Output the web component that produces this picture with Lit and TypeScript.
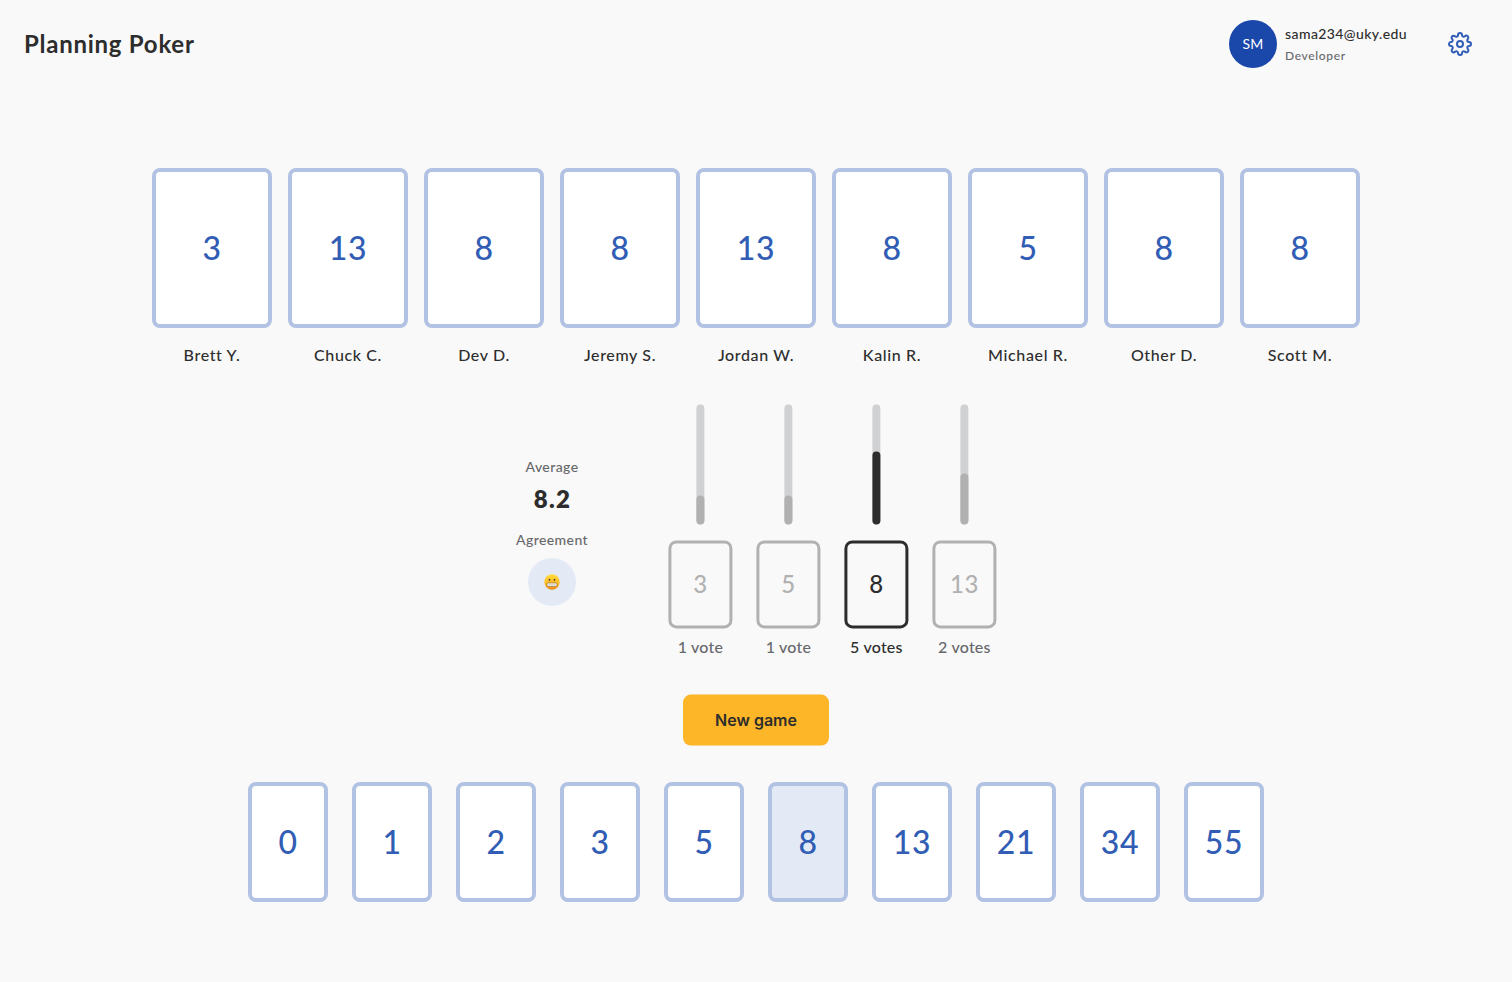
import { LitElement, html, css } from "lit";
import { customElement } from "lit/decorators.js";
import { classMap } from "lit/directives/class-map.js";
import { styleMap } from "lit/directives/style-map.js";

const PLAYERS = [
  { name: "Brett Y.", vote: 3 },
  { name: "Chuck C.", vote: 13 },
  { name: "Dev D.", vote: 8 },
  { name: "Jeremy S.", vote: 8 },
  { name: "Jordan W.", vote: 13 },
  { name: "Kalin R.", vote: 8 },
  { name: "Michael R.", vote: 5 },
  { name: "Other D.", vote: 8 },
  { name: "Scott M.", vote: 8 },
];

const RESULTS = [
  { value: 3, votes: 1, fill: 29 },
  { value: 5, votes: 1, fill: 29 },
  { value: 8, votes: 5, fill: 73 },
  { value: 13, votes: 2, fill: 51 },
];

const DECK = [0, 1, 2, 3, 5, 8, 13, 21, 34, 55];
const SELECTED = 8;

@customElement("app-root")
export class AppRoot extends LitElement {
  static styles = css`
    :host {
      display: flex;
      flex-direction: column;
      box-sizing: border-box;
      height: 982px;
      background: #f9f9f9;
      color: #2d2d2d;
      font-family: Lato, "Open Sans", sans-serif;
      font-weight: 500;
      overflow: hidden;
    }
    * { box-sizing: border-box; }
    .header {
      display: flex;
      align-items: center;
      height: 88px;
      padding: 0 40px 0 24px;
    }
    .title {
      margin: 0;
      flex: 1;
      font-size: 24px;
      line-height: 32px;
      padding-bottom: 1px;
      font-weight: 700;
      letter-spacing: 0.74px;
    }
    .user { display: flex; gap: 8px; width: 219px; }
    .avatar {
      display: grid;
      place-items: center;
      width: 48px;
      height: 48px;
      padding-bottom: 1px;
      border-radius: 50%;
      background: #1a47aa;
      color: #fff;
      font-size: 14px;
      font-weight: 400;
      letter-spacing: 0.3px;
    }
    .email { font-size: 14px; line-height: 20px; padding-top: 4px; letter-spacing: 0.41px; }
    .role { font-size: 12px; line-height: 16px; margin-top: 4px; color: #67686b; letter-spacing: 0.65px; }
    .gear { display: block; width: 24px; height: 24px; color: #315db5; }
    .players { display: flex; justify-content: center; gap: 16px; margin-top: 80px; }
    .player { width: 120px; text-align: center; }
    .card {
      display: grid;
      place-items: center;
      border: 4px solid #b1c2e3;
      border-radius: 8px;
      background: #fff;
      color: #315db5;
      font-size: 32px;
      line-height: 40px;
      letter-spacing: 0.6px;
    }
    .large { height: 160px; }
    .small { width: 80px; height: 120px; }
    .selected { background: #e4eaf5; }
    .name { margin-top: 15px; font-size: 16px; line-height: 24px; letter-spacing: 0.63px; white-space: nowrap; }
    .summary { display: flex; margin: 37px 0 0 492px; height: 255px; }
    .stats { width: 120px; padding-top: 53px; text-align: center; }
    .label { color: #67686b; font-size: 14px; line-height: 20px; letter-spacing: 0.42px; }
    .average { font-size: 24px; line-height: 32px; margin: 6px 0 15px; font-weight: 800; letter-spacing: 1.3px; padding-left: 1px; }
    .mood {
      display: grid;
      place-items: center;
      width: 48px;
      height: 48px;
      margin: 8px auto 0;
      border-radius: 50%;
      background: #e4eaf5;
    }
    .face { display: block; width: 16px; height: 16px; }
    .results { display: flex; gap: 24px; margin-left: 56px; transform: translate(0.4px, 0.4px); }
    .result { display: flex; flex-direction: column; align-items: center; width: 64px; color: #67686b; }
    .track {
      display: flex;
      align-items: flex-end;
      width: 8px;
      height: 120px;
      border-radius: 4px;
      background: #d0d1d2;
    }
    .fill { width: 8px; border-radius: 4px; background: #b1b1b2; }
    .tile {
      display: grid;
      place-items: center;
      width: 64px;
      height: 88px;
      margin-top: 16px;
      padding-bottom: 2px;
      border: 3px solid #b1b1b2;
      border-radius: 8px;
      color: #b1b1b2;
      font-size: 24px;
      letter-spacing: 0.4px;
    }
    .count { margin-top: 8px; font-size: 16px; line-height: 22px; white-space: nowrap; letter-spacing: 0.2px; }
    .top { color: #2d2d2d; }
    .top .fill { background: #2d2d2d; }
    .top .tile { border-color: #2d2d2d; color: #2d2d2d; }
    .action {
      align-self: center;
      width: 146px;
      height: 51px;
      margin-top: 36px;
      padding: 0 0 2px;
      border: 0;
      border-radius: 8px;
      background: #fcb627;
      color: #2d2d2d;
      font: 600 16px Inter, sans-serif;
      transform: translateY(-0.4px);
    }
    .deck { display: flex; justify-content: center; gap: 24px; margin-top: 36px; }
  `;

  render() {
    return html`
      <header class="header">
        <h1 class="title">Planning Poker</h1>
        <div class="user">
          <div class="avatar">SM</div>
          <div>
            <div class="email">sama234@uky.edu</div>
            <div class="role">Developer</div>
          </div>
        </div>
        <svg class="gear" viewBox="0 0 24 24" fill="none" stroke="currentColor" stroke-width="2" stroke-linecap="round" stroke-linejoin="round">
          <circle cx="12" cy="12" r="3"></circle>
          <path d="M19.4 15a1.65 1.65 0 0 0 .33 1.82l.06.06a2 2 0 0 1 0 2.83 2 2 0 0 1-2.83 0l-.06-.06a1.65 1.65 0 0 0-1.82-.33 1.65 1.65 0 0 0-1 1.51V21a2 2 0 0 1-2 2 2 2 0 0 1-2-2v-.09A1.65 1.65 0 0 0 9 19.4a1.65 1.65 0 0 0-1.82.33l-.06.06a2 2 0 0 1-2.83 0 2 2 0 0 1 0-2.83l.06-.06a1.65 1.65 0 0 0 .33-1.82 1.65 1.65 0 0 0-1.51-1H3a2 2 0 0 1-2-2 2 2 0 0 1 2-2h.09A1.65 1.65 0 0 0 4.6 9a1.65 1.65 0 0 0-.33-1.82l-.06-.06a2 2 0 0 1 0-2.83 2 2 0 0 1 2.83 0l.06.06a1.65 1.65 0 0 0 1.82.33H9a1.65 1.65 0 0 0 1-1.51V3a2 2 0 0 1 2-2 2 2 0 0 1 2 2v.09a1.65 1.65 0 0 0 1 1.51 1.65 1.65 0 0 0 1.82-.33l.06-.06a2 2 0 0 1 2.83 0 2 2 0 0 1 0 2.83l-.06.06a1.65 1.65 0 0 0-.33 1.82V9a1.65 1.65 0 0 0 1.51 1H21a2 2 0 0 1 2 2 2 2 0 0 1-2 2h-.09a1.65 1.65 0 0 0-1.51 1z"></path>
        </svg>
      </header>

      <section class="players">
        ${PLAYERS.map(
          (p) => html`<div class="player">
            <div class="card large">${p.vote}</div>
            <div class="name">${p.name}</div>
          </div>`
        )}
      </section>

      <section class="summary">
        <div class="stats">
          <div class="label">Average</div>
          <div class="average">8.2</div>
          <div class="label">Agreement</div>
          <div class="mood">
            <svg class="face" viewBox="0 0 16 16">
              <defs>
                <linearGradient id="skin" x1="0" y1="0" x2="0" y2="1">
                  <stop offset="0" stop-color="#ffdc3c"></stop>
                  <stop offset="0.55" stop-color="#fdbf2a"></stop>
                  <stop offset="1" stop-color="#ee8a1c"></stop>
                </linearGradient>
              </defs>
              <circle cx="8" cy="8" r="7.7" fill="url(#skin)"></circle>
              <ellipse cx="5.5" cy="5.8" rx="0.95" ry="1.15" fill="#70421a"></ellipse>
              <ellipse cx="10.5" cy="5.8" rx="0.95" ry="1.15" fill="#70421a"></ellipse>
              <rect x="2.9" y="8.9" width="10.2" height="3.6" rx="1.5" fill="#f4f1ea" stroke="#a5742e" stroke-width="0.7"></rect>
              <path d="M3.4 10.7h9.2M5.5 9.2v3M8 9.2v3M10.5 9.2v3" stroke="#b9b9b9" stroke-width="0.4"></path>
            </svg>
          </div>
        </div>
        <div class="results">
          ${RESULTS.map(
            (r) => html`<div class=${classMap({ result: true, top: r.votes === 5 })}>
              <div class="track">
                <div class="fill" style=${styleMap({ height: `${r.fill}px` })}></div>
              </div>
              <div class="tile">${r.value}</div>
              <div class="count">${r.votes} ${r.votes === 1 ? "vote" : "votes"}</div>
            </div>`
          )}
        </div>
      </section>

      <button class="action">New game</button>

      <section class="deck">
        ${DECK.map(
          (v) => html`<div class=${classMap({ card: true, small: true, selected: v === SELECTED })}>${v}</div>`
        )}
      </section>
    `;
  }
}
